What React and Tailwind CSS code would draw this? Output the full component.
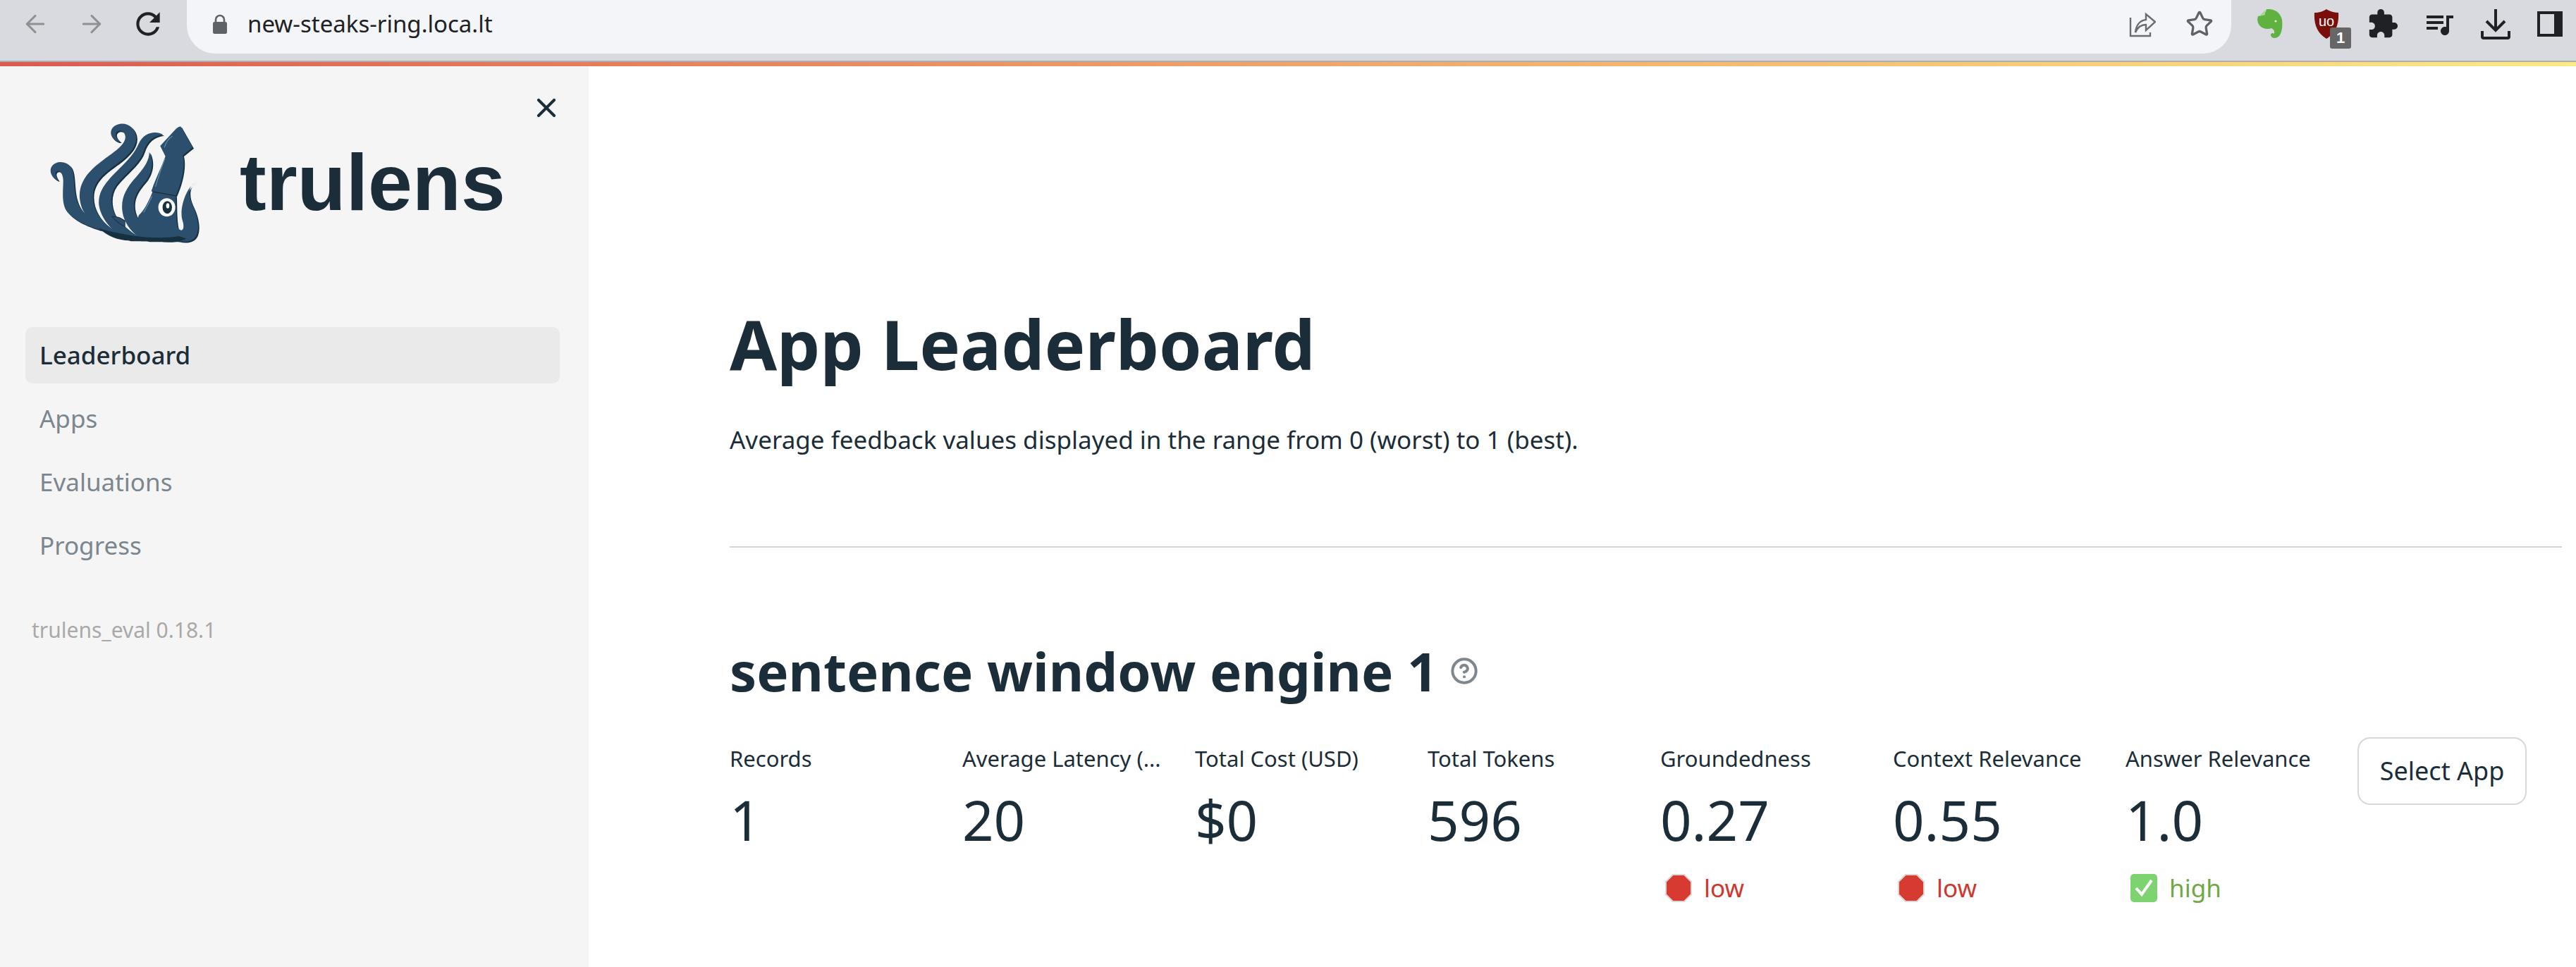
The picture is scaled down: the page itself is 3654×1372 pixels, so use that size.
import React from "react";
import { ArrowLeft, ArrowRight, CircleHelp, Star, X } from "lucide-react";
import { MdExtension, MdQueueMusic, MdRefresh } from "react-icons/md";

const metrics = [
  { label: "Records", value: "1" },
  { label: "Average Latency (...", value: "20" },
  { label: "Total Cost (USD)", value: "$0" },
  { label: "Total Tokens", value: "596" },
  { label: "Groundedness", value: "0.27", status: "low" },
  { label: "Context Relevance", value: "0.55", status: "low" },
  { label: "Answer Relevance", value: "1.0", status: "high" },
];

const navItems = ["Apps", "Evaluations", "Progress"];

// tentacles and body, traced from the logo
const squidParts = [
  "M128 320 C100 310 85 280 100 258 C118 232 165 235 183 265 C198 295 190 350 205 400 C215 435 235 460 260 475 L310 530 C260 515 190 490 160 445 C140 410 148 360 148 320 C148 295 135 272 120 280 C108 290 120 305 128 320 Z",
  "M392 155 C355 155 335 110 365 88 C400 62 455 85 458 135 C460 175 430 205 395 235 C350 270 285 305 275 370 C268 425 295 480 350 520 L400 560 L340 545 C280 510 225 470 218 395 C212 320 265 270 320 230 C360 200 410 170 412 135 C412 105 380 100 372 118 C368 130 380 145 392 155 Z",
  "M572 124 C530 130 505 150 490 195 C475 245 410 290 372 340 C340 385 348 455 395 500 C420 525 450 550 500 572 L430 572 C370 550 310 490 300 425 C292 360 340 315 385 270 C425 230 450 205 470 160 C490 115 540 105 572 124 Z",
  "M514 198 C535 240 525 290 495 325 C460 365 440 400 452 450 C465 500 510 530 570 540 L640 575 L510 575 C450 560 400 500 398 435 C396 375 430 335 465 295 C495 260 512 235 514 198 Z",
  "M712 322 C675 345 680 385 695 420 C715 460 730 510 715 550 C700 585 650 585 610 565 L560 520 C600 520 625 515 640 525 C655 540 665 520 655 490 C640 445 665 355 712 322 Z",
  "M528 366 L626 384 C628 440 625 500 640 540 C620 565 560 570 510 535 C470 515 460 480 470 465 C490 450 510 410 528 366 Z",
  "M628 98 Q640 88 648 90 L698 178 L656 212 C668 260 650 330 626 384 L522 365 C540 310 565 265 582 216 L560 172 Z",
];

function SquidLogo() {
  return (
    <svg width="217" height="172" viewBox="80 70 650 515">
      <g fill="#17303f" transform="translate(5 5)">
        {squidParts.map((d) => (
          <path key={d} d={d} />
        ))}
      </g>
      <g fill="#2b4f6d">
        {squidParts.map((d) => (
          <path key={d} d={d} />
        ))}
      </g>
      <path d="M300 522 C340 560 400 580 450 572 C490 582 530 572 560 578 C600 585 650 580 670 566 L640 555 C560 570 430 560 300 522 Z" fill="#17303f" />
      <path d="M528 366 L626 384" stroke="#17303f" strokeWidth="4" fill="none" />
      <path d="M612 130 C595 140 585 155 578 178 M580 225 C565 265 550 310 540 345 M525 385 C515 410 505 425 490 455" stroke="#6f9ab8" strokeWidth="3" fill="none" />
      <path d="M355 472 C380 470 395 480 410 490 L410 515 C390 505 370 490 355 472 Z" fill="#2b4f6d" stroke="#17303f" strokeWidth="3" />
      <ellipse cx="588" cy="433" rx="36" ry="39" fill="#fff" />
      <ellipse cx="590" cy="433" rx="20" ry="27" fill="#17303f" />
      <ellipse cx="592" cy="426" rx="7" ry="11" fill="#fff" />
    </svg>
  );
}

function Toolbar() {
  return (
    <div className="h-[86px] bg-[#d8dadf] flex overflow-hidden">
      <div className="w-[10px]" />
      <div className="w-[80px] h-[68px] flex items-center justify-center text-[#8e9094]">
        <ArrowLeft size={40} strokeWidth={1.8} />
      </div>
      <div className="w-[80px] h-[68px] flex items-center justify-center text-[#8e9094]">
        <ArrowRight size={40} strokeWidth={1.8} />
      </div>
      <div className="w-[80px] h-[68px] flex items-center justify-center text-[#202124]">
        <MdRefresh size={50} />
      </div>
      <div className="w-[15px]" />
      <div className="flex-1 h-[76px] bg-[#f4f5f8] rounded-b-[40px] flex items-center pl-[36px]">
        <svg width="22" height="28" viewBox="0 0 22 28" className="mt-[-8px]">
          <path d="M5 12 V8 a6 6 0 0 1 12 0 V12" fill="none" stroke="#5f6368" strokeWidth="2.6" />
          <rect x="1" y="11" width="20" height="17" rx="2.5" fill="#5f6368" />
        </svg>
        <span className="ml-[28px] mt-[-8px] text-[33px] leading-[44px] text-[#202124] font-['Noto_Sans',sans-serif]">
          new-steaks-ring.loca.lt
        </span>
        <div className="ml-auto mr-[25px] mt-[-8px] flex items-center gap-[42px] text-[#5f6368]">
          <svg width="38" height="38" viewBox="0 0 38 38" fill="none" stroke="#6a6d70" strokeWidth="2.4">
            <path d="M2 10 V36 H30 V31" />
            <path d="M9 31 C10 20 16 14 24 13 V5 L37 16 L24 28 V20 C17 20 12 24 9 31 Z" />
          </svg>
          <Star size={40} strokeWidth={2} />
        </div>
      </div>
      <div className="w-[15px]" />
      <div className="w-[80px] h-[68px] flex items-center justify-center">
        <svg width="36" height="42" viewBox="0 0 36 42">
          <path d="M13 0 C24 -1 33 5 35 15 C36 24 35 33 31 38 C27 42 20 42 19 37 C18.5 34 22 33 23.5 35 C25 32 24 29 20 27 C15 29 7 28 3 23 C0 19 -0.5 14 1 10 L10 8 Z" fill="#5fb140" />
          <path d="M11 1 L11 8 L3 10 Z" fill="#a6d68f" />
          <circle cx="26" cy="17" r="1.6" fill="#e8f5e0" />
        </svg>
      </div>
      <div className="w-[80px] h-[68px] flex items-center justify-center relative">
        <svg width="36" height="42" viewBox="0 0 36 42">
          <path d="M18 0 C22 3 29 5 35 5 C36 22 31 34 18 42 C5 34 0 22 1 5 C7 5 14 3 18 0 Z" fill="#7a0e0a" />
          <text x="18" y="24" textAnchor="middle" fontSize="20" fill="#fff" fontFamily="Liberation Sans, sans-serif">uo</text>
        </svg>
        <span className="absolute left-[45px] top-[39px] w-[30px] h-[30px] rounded-[3px] bg-[#666666] text-white text-[22px] leading-[30px] font-bold text-center font-['Liberation_Sans',sans-serif]">
          1
        </span>
      </div>
      <div className="w-[80px] h-[68px] flex items-center justify-center text-[#202124]">
        <MdExtension size={46} />
      </div>
      <div className="w-[80px] h-[68px] flex items-center justify-center text-[#202124]">
        <MdQueueMusic size={48} />
      </div>
      <div className="w-[80px] h-[68px] flex items-center justify-center">
        <svg width="42" height="44" viewBox="0 0 42 44" fill="none" stroke="#202124" strokeWidth="4">
          <path d="M21 1 V29 M8 18 L21 31 L34 18" />
          <path d="M2 32 V40 a2 2 0 0 0 2 2 H38 a2 2 0 0 0 2 -2 V32" />
        </svg>
      </div>
      <div className="w-[74px] h-[68px] flex items-center justify-center">
        <div className="w-[36px] h-[36px] border-[4px] border-r-[12px] border-[#202124]" />
      </div>
    </div>
  );
}

function Status({ kind }) {
  if (kind === "high") {
    return (
      <div className="flex items-center mt-[25px] h-[44px] ml-[7px]">
        <svg width="38" height="40" viewBox="0 0 38 40">
          <rect x="0" y="0" width="38" height="40" rx="5" fill="#7dd36f" />
          <path d="M8 20 L16 29 L30 9" fill="none" stroke="#fff" strokeWidth="4" />
        </svg>
        <span className="ml-[17px] text-[35px] leading-[44px] text-[#70a845]">high</span>
      </div>
    );
  }
  return (
    <div className="flex items-center mt-[25px] h-[44px] ml-[7px]">
      <svg width="38" height="40" viewBox="0 0 38 40">
        <polygon points="11,1 27,1 37,11 37,29 27,39 11,39 1,29 1,11" fill="#d63a31" stroke="#dcd6d5" strokeWidth="2" />
      </svg>
      <span className="ml-[17px] text-[35px] leading-[44px] text-[#d2352c]">low</span>
    </div>
  );
}

export default function App() {
  return (
    <div className="w-[3654px] h-[1372px] overflow-hidden bg-white flex flex-col font-['Noto_Sans',sans-serif] text-[#1b2d38]">
      <Toolbar />
      <div className="h-[8px] border-t-[2px] border-[#adadad] bg-gradient-to-r from-[#db5a50] to-[#fbe985]" />

      <div className="flex flex-1">
        {/* Sidebar */}
        <div className="w-[835px] bg-[#f5f5f5] flex flex-col">
          <div className="flex justify-end pt-[45px] pr-[38px]">
            <X size={44} strokeWidth={2.2} className="text-[#1b2d38] -my-[8px]" />
          </div>
          <div className="flex items-center ml-[67px] mt-[6px]">
            <SquidLogo />
            <span className="ml-[56px] text-[113px] leading-[120px] font-bold font-['Liberation_Sans',sans-serif] text-[#1a2d39]">
              trulens
            </span>
          </div>
          <div className="ml-[36px] mt-[119px] w-[758px] flex flex-col gap-[10px]">
            <div className="h-[80px] bg-[#eaeaea] rounded-[10px] flex items-center pl-[20px] text-[35px] font-medium">
              Leaderboard
            </div>
            {navItems.map((n) => (
              <div key={n} className="h-[80px] flex items-center pl-[20px] text-[35px] text-[#7b868e]">
                {n}
              </div>
            ))}
          </div>
          <div className="ml-[45px] mt-[60px] text-[30px] leading-[40px] text-[#a9a9a9]">trulens_eval 0.18.1</div>
        </div>

        {/* Main */}
        <div className="flex-1 pl-[200px] pr-[20px] pt-[343px]">
          <h1 className="text-[97px] leading-[100px] font-bold">App Leaderboard</h1>
          <p className="mt-[62px] text-[35px] leading-[50px]">
            Average feedback values displayed in the range from 0 (worst) to 1 (best).
          </p>
          <div className="mt-[126px] h-[2px] bg-[#d5d6d8]" />
          <div className="mt-[135px] flex items-center h-[80px]">
            <h2 className="text-[76px] leading-[80px] font-bold">sentence window engine 1</h2>
            <CircleHelp size={40} strokeWidth={2.4} className="ml-[17px] text-[#7f878e]" />
          </div>
          <div className="mt-[64px] flex">
            {metrics.map((m) => (
              <div key={m.label} className="w-[330px]">
                <div className="text-[31px] leading-[40px]">{m.label}</div>
                <div className="mt-[17px] text-[78px] leading-[100px]">{m.value}</div>
                {m.status && <Status kind={m.status} />}
              </div>
            ))}
            <button className="ml-[-1px] -mt-[10px] w-[240px] h-[96px] rounded-[18px] border-[2px] border-[#d6d8da] bg-white text-[36px] text-[#1b2d38]">
              Select App
            </button>
          </div>
        </div>
      </div>
    </div>
  );
}
